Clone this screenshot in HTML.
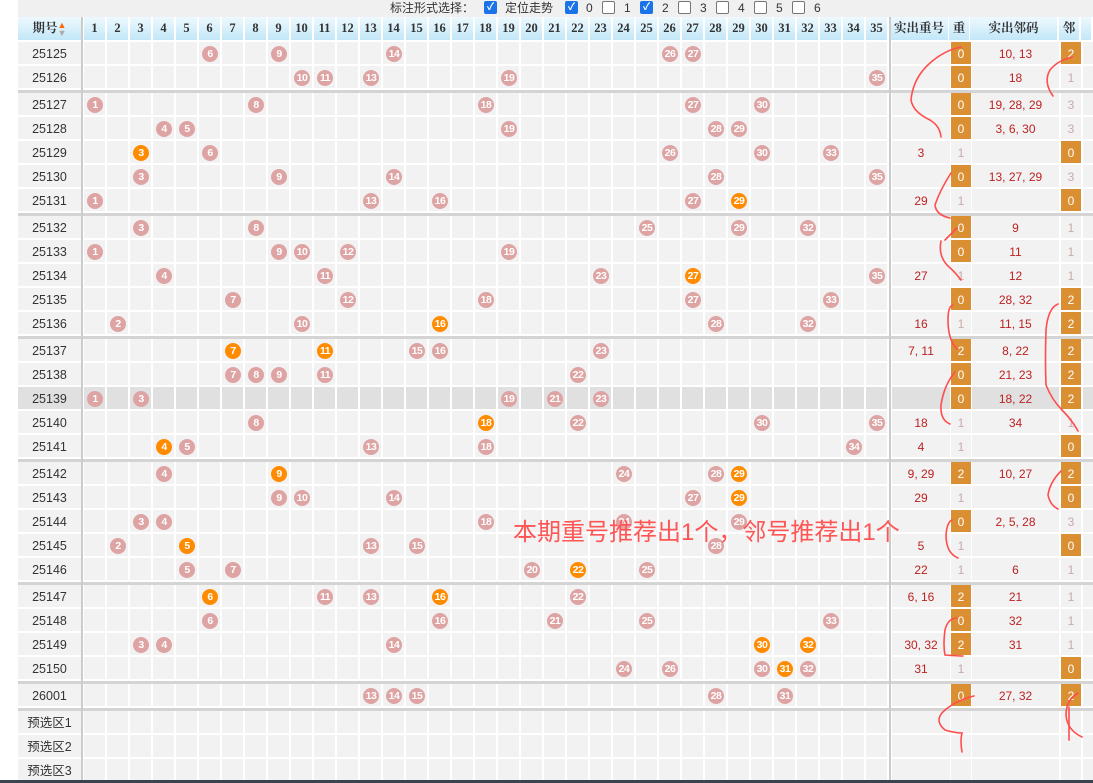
<!DOCTYPE html>
<html><head><meta charset="utf-8"><style>
*{box-sizing:border-box;margin:0;padding:0}
body{width:1093px;height:783px;overflow:hidden;background:#fff;position:relative;font-family:"Liberation Sans","Noto Sans CJK SC",sans-serif;font-size:12px;color:#333}
.top{position:absolute;left:18px;top:0;width:1075px;height:17px;background:#f0f0f0}
.tt{position:absolute;top:1px;font-size:12px;color:#333;line-height:14px}
.cb{position:absolute;top:1px;width:13px;height:13px;border:1px solid #767676;border-radius:2px;background:#fff}
.cb.on{background:#1a73e8;border-color:#1a73e8;color:#fff;font-size:10px;line-height:11px;text-align:center;font-weight:bold}
.hd{position:absolute;left:18px;top:17px;height:23px;width:1075px;display:flex;background:#fff}
.hd span{height:23px;background:linear-gradient(#eef9fe,#c2e7f8);font-weight:bold;font-size:12.5px;line-height:23px;text-align:center;color:#333;font-family:"Liberation Serif","Noto Serif CJK SC",serif}
.hd .c{width:21px;margin-right:2px}
.bk{position:absolute;left:18px;top:40px;width:1075px;height:743px;background:#d4d4d4}
.r{position:absolute;left:18px;width:1075px;height:24px;background:#fff}
.r>div{position:absolute;top:0;height:22px;background:#f2f2f2;line-height:24px;text-align:center}
.q{left:0;width:63px;font-size:12.5px;color:#333}
.g{left:66px;width:805px;background:repeating-linear-gradient(90deg,#f2f2f2 0 21px,#fff 21px 23px)!important}
.s{left:874px;width:58px;color:#b22;font-size:12px}
.z{left:933px;width:20px;color:#c9a9a9}
.m{left:954px;width:87px;color:#b22;font-size:12px}
.n{left:1043px;width:20px;color:#c9a9a9}
.t{left:1065px;width:10px}
.r>div.o{background:#da8f33;color:#fff}
.hl>div{background:#e0e0e0}
.hl>.g{background:repeating-linear-gradient(90deg,#e0e0e0 0 21px,#fff 21px 23px)!important}
.b{position:absolute;top:4px;width:16px;height:16px;border-radius:50%;background:#dea4a4;color:#fff;font-size:10.5px;font-weight:bold;line-height:16px;text-align:center;letter-spacing:-0.5px}
.b.y{background:#ff8c00}
.vd{position:absolute;top:17px;width:2px;height:766px;background:#ccc}
.ft{position:absolute;left:0;top:780px;width:1093px;height:3px;background:#3a4450}
</style></head><body>
<div class="top"></div>
<span class="tt" style="left:390px">标注形式选择：</span>
<span class="cb on" style="left:484px">✓</span><span class="tt" style="left:505px">定位走势</span>
<span class="cb on" style="left:565px">✓</span><span class="tt" style="left:586px">0</span>
<span class="cb" style="left:602px"></span><span class="tt" style="left:624px">1</span>
<span class="cb on" style="left:640px">✓</span><span class="tt" style="left:662px">2</span>
<span class="cb" style="left:678px"></span><span class="tt" style="left:700px">3</span>
<span class="cb" style="left:716px"></span><span class="tt" style="left:738px">4</span>
<span class="cb" style="left:754px"></span><span class="tt" style="left:776px">5</span>
<span class="cb" style="left:792px"></span><span class="tt" style="left:814px">6</span>

<div class="hd"><span style="width:63px;margin-right:3px">期号<b style="color:#f60;font-size:9px;display:inline-block;line-height:8px;vertical-align:middle">▲<br><i style="color:#aaa;font-style:normal">▼</i></b></span><span class="c">1</span><span class="c">2</span><span class="c">3</span><span class="c">4</span><span class="c">5</span><span class="c">6</span><span class="c">7</span><span class="c">8</span><span class="c">9</span><span class="c">10</span><span class="c">11</span><span class="c">12</span><span class="c">13</span><span class="c">14</span><span class="c">15</span><span class="c">16</span><span class="c">17</span><span class="c">18</span><span class="c">19</span><span class="c">20</span><span class="c">21</span><span class="c">22</span><span class="c">23</span><span class="c">24</span><span class="c">25</span><span class="c">26</span><span class="c">27</span><span class="c">28</span><span class="c">29</span><span class="c">30</span><span class="c">31</span><span class="c">32</span><span class="c">33</span><span class="c">34</span><span class="c" style="margin-right:3px">35</span><span style="width:58px;margin-right:1px">实出重号</span><span style="width:20px;margin-right:1px">重</span><span style="width:87px;margin-right:2px">实出邻码</span><span style="width:20px;margin-right:2px">邻</span><span style="width:10px"></span></div>

<div class="bk"></div>
<div style="position:absolute;left:18px;top:40px;width:1075px;height:2px;background:#fff"></div>

<div class="r" style="top:42px"><div class="q">25125</div><div class="g"></div><div class="s"></div><div class="z o">0</div><div class="m">10, 13</div><div class="n o">2</div><div class="t"></div>
<span class="b" style="left:184px">6</span><span class="b" style="left:253px">9</span><span class="b" style="left:368px">14</span><span class="b" style="left:644px">26</span><span class="b" style="left:667px">27</span></div>
<div class="r" style="top:66px"><div class="q">25126</div><div class="g"></div><div class="s"></div><div class="z o">0</div><div class="m">18</div><div class="n">1</div><div class="t"></div>
<span class="b" style="left:276px">10</span><span class="b" style="left:299px">11</span><span class="b" style="left:345px">13</span><span class="b" style="left:483px">19</span><span class="b" style="left:851px">35</span></div>

<div class="r" style="top:93px"><div class="q">25127</div><div class="g"></div><div class="s"></div><div class="z o">0</div><div class="m">19, 28, 29</div><div class="n">3</div><div class="t"></div>
<span class="b" style="left:69px">1</span><span class="b" style="left:230px">8</span><span class="b" style="left:460px">18</span><span class="b" style="left:667px">27</span><span class="b" style="left:736px">30</span></div>
<div class="r" style="top:117px"><div class="q">25128</div><div class="g"></div><div class="s"></div><div class="z o">0</div><div class="m">3, 6, 30</div><div class="n">3</div><div class="t"></div>
<span class="b" style="left:138px">4</span><span class="b" style="left:161px">5</span><span class="b" style="left:483px">19</span><span class="b" style="left:690px">28</span><span class="b" style="left:713px">29</span></div>
<div class="r" style="top:141px"><div class="q">25129</div><div class="g"></div><div class="s">3</div><div class="z">1</div><div class="m"></div><div class="n o">0</div><div class="t"></div>
<span class="b y" style="left:115px">3</span><span class="b" style="left:184px">6</span><span class="b" style="left:644px">26</span><span class="b" style="left:736px">30</span><span class="b" style="left:805px">33</span></div>
<div class="r" style="top:165px"><div class="q">25130</div><div class="g"></div><div class="s"></div><div class="z o">0</div><div class="m">13, 27, 29</div><div class="n">3</div><div class="t"></div>
<span class="b" style="left:115px">3</span><span class="b" style="left:253px">9</span><span class="b" style="left:368px">14</span><span class="b" style="left:690px">28</span><span class="b" style="left:851px">35</span></div>
<div class="r" style="top:189px"><div class="q">25131</div><div class="g"></div><div class="s">29</div><div class="z">1</div><div class="m"></div><div class="n o">0</div><div class="t"></div>
<span class="b" style="left:69px">1</span><span class="b" style="left:345px">13</span><span class="b" style="left:414px">16</span><span class="b" style="left:667px">27</span><span class="b y" style="left:713px">29</span></div>

<div class="r" style="top:216px"><div class="q">25132</div><div class="g"></div><div class="s"></div><div class="z o">0</div><div class="m">9</div><div class="n">1</div><div class="t"></div>
<span class="b" style="left:115px">3</span><span class="b" style="left:230px">8</span><span class="b" style="left:621px">25</span><span class="b" style="left:713px">29</span><span class="b" style="left:782px">32</span></div>
<div class="r" style="top:240px"><div class="q">25133</div><div class="g"></div><div class="s"></div><div class="z o">0</div><div class="m">11</div><div class="n">1</div><div class="t"></div>
<span class="b" style="left:69px">1</span><span class="b" style="left:253px">9</span><span class="b" style="left:276px">10</span><span class="b" style="left:322px">12</span><span class="b" style="left:483px">19</span></div>
<div class="r" style="top:264px"><div class="q">25134</div><div class="g"></div><div class="s">27</div><div class="z">1</div><div class="m">12</div><div class="n">1</div><div class="t"></div>
<span class="b" style="left:138px">4</span><span class="b" style="left:299px">11</span><span class="b" style="left:575px">23</span><span class="b y" style="left:667px">27</span><span class="b" style="left:851px">35</span></div>
<div class="r" style="top:288px"><div class="q">25135</div><div class="g"></div><div class="s"></div><div class="z o">0</div><div class="m">28, 32</div><div class="n o">2</div><div class="t"></div>
<span class="b" style="left:207px">7</span><span class="b" style="left:322px">12</span><span class="b" style="left:460px">18</span><span class="b" style="left:667px">27</span><span class="b" style="left:805px">33</span></div>
<div class="r" style="top:312px"><div class="q">25136</div><div class="g"></div><div class="s">16</div><div class="z">1</div><div class="m">11, 15</div><div class="n o">2</div><div class="t"></div>
<span class="b" style="left:92px">2</span><span class="b" style="left:276px">10</span><span class="b y" style="left:414px">16</span><span class="b" style="left:690px">28</span><span class="b" style="left:782px">32</span></div>

<div class="r" style="top:339px"><div class="q">25137</div><div class="g"></div><div class="s">7, 11</div><div class="z o">2</div><div class="m">8, 22</div><div class="n o">2</div><div class="t"></div>
<span class="b y" style="left:207px">7</span><span class="b y" style="left:299px">11</span><span class="b" style="left:391px">15</span><span class="b" style="left:414px">16</span><span class="b" style="left:575px">23</span></div>
<div class="r" style="top:363px"><div class="q">25138</div><div class="g"></div><div class="s"></div><div class="z o">0</div><div class="m">21, 23</div><div class="n o">2</div><div class="t"></div>
<span class="b" style="left:207px">7</span><span class="b" style="left:230px">8</span><span class="b" style="left:253px">9</span><span class="b" style="left:299px">11</span><span class="b" style="left:552px">22</span></div>
<div class="r hl" style="top:387px"><div class="q">25139</div><div class="g"></div><div class="s"></div><div class="z o">0</div><div class="m">18, 22</div><div class="n o">2</div><div class="t"></div>
<span class="b" style="left:69px">1</span><span class="b" style="left:115px">3</span><span class="b" style="left:483px">19</span><span class="b" style="left:529px">21</span><span class="b" style="left:575px">23</span></div>
<div class="r" style="top:411px"><div class="q">25140</div><div class="g"></div><div class="s">18</div><div class="z">1</div><div class="m">34</div><div class="n">1</div><div class="t"></div>
<span class="b" style="left:230px">8</span><span class="b y" style="left:460px">18</span><span class="b" style="left:552px">22</span><span class="b" style="left:736px">30</span><span class="b" style="left:851px">35</span></div>
<div class="r" style="top:435px"><div class="q">25141</div><div class="g"></div><div class="s">4</div><div class="z">1</div><div class="m"></div><div class="n o">0</div><div class="t"></div>
<span class="b y" style="left:138px">4</span><span class="b" style="left:161px">5</span><span class="b" style="left:345px">13</span><span class="b" style="left:460px">18</span><span class="b" style="left:828px">34</span></div>

<div class="r" style="top:462px"><div class="q">25142</div><div class="g"></div><div class="s">9, 29</div><div class="z o">2</div><div class="m">10, 27</div><div class="n o">2</div><div class="t"></div>
<span class="b" style="left:138px">4</span><span class="b y" style="left:253px">9</span><span class="b" style="left:598px">24</span><span class="b" style="left:690px">28</span><span class="b y" style="left:713px">29</span></div>
<div class="r" style="top:486px"><div class="q">25143</div><div class="g"></div><div class="s">29</div><div class="z">1</div><div class="m"></div><div class="n o">0</div><div class="t"></div>
<span class="b" style="left:253px">9</span><span class="b" style="left:276px">10</span><span class="b" style="left:368px">14</span><span class="b" style="left:667px">27</span><span class="b y" style="left:713px">29</span></div>
<div class="r" style="top:510px"><div class="q">25144</div><div class="g"></div><div class="s"></div><div class="z o">0</div><div class="m">2, 5, 28</div><div class="n">3</div><div class="t"></div>
<span class="b" style="left:115px">3</span><span class="b" style="left:138px">4</span><span class="b" style="left:460px">18</span><span class="b" style="left:598px">24</span><span class="b" style="left:713px">29</span></div>
<div class="r" style="top:534px"><div class="q">25145</div><div class="g"></div><div class="s">5</div><div class="z">1</div><div class="m"></div><div class="n o">0</div><div class="t"></div>
<span class="b" style="left:92px">2</span><span class="b y" style="left:161px">5</span><span class="b" style="left:345px">13</span><span class="b" style="left:391px">15</span><span class="b" style="left:690px">28</span></div>
<div class="r" style="top:558px"><div class="q">25146</div><div class="g"></div><div class="s">22</div><div class="z">1</div><div class="m">6</div><div class="n">1</div><div class="t"></div>
<span class="b" style="left:161px">5</span><span class="b" style="left:207px">7</span><span class="b" style="left:506px">20</span><span class="b y" style="left:552px">22</span><span class="b" style="left:621px">25</span></div>

<div class="r" style="top:585px"><div class="q">25147</div><div class="g"></div><div class="s">6, 16</div><div class="z o">2</div><div class="m">21</div><div class="n">1</div><div class="t"></div>
<span class="b y" style="left:184px">6</span><span class="b" style="left:299px">11</span><span class="b" style="left:345px">13</span><span class="b y" style="left:414px">16</span><span class="b" style="left:552px">22</span></div>
<div class="r" style="top:609px"><div class="q">25148</div><div class="g"></div><div class="s"></div><div class="z o">0</div><div class="m">32</div><div class="n">1</div><div class="t"></div>
<span class="b" style="left:184px">6</span><span class="b" style="left:414px">16</span><span class="b" style="left:529px">21</span><span class="b" style="left:621px">25</span><span class="b" style="left:805px">33</span></div>
<div class="r" style="top:633px"><div class="q">25149</div><div class="g"></div><div class="s">30, 32</div><div class="z o">2</div><div class="m">31</div><div class="n">1</div><div class="t"></div>
<span class="b" style="left:115px">3</span><span class="b" style="left:138px">4</span><span class="b" style="left:368px">14</span><span class="b y" style="left:736px">30</span><span class="b y" style="left:782px">32</span></div>
<div class="r" style="top:657px"><div class="q">25150</div><div class="g"></div><div class="s">31</div><div class="z">1</div><div class="m"></div><div class="n o">0</div><div class="t"></div>
<span class="b" style="left:598px">24</span><span class="b" style="left:644px">26</span><span class="b" style="left:736px">30</span><span class="b y" style="left:759px">31</span><span class="b" style="left:782px">32</span></div>

<div class="r" style="top:684px"><div class="q">26001</div><div class="g"></div><div class="s"></div><div class="z o">0</div><div class="m">27, 32</div><div class="n o">2</div><div class="t"></div>
<span class="b" style="left:345px">13</span><span class="b" style="left:368px">14</span><span class="b" style="left:391px">15</span><span class="b" style="left:690px">28</span><span class="b" style="left:759px">31</span></div>

<div class="r" style="top:711px"><div class="q">预选区1</div><div class="g"></div><div class="s"></div><div class="z"></div><div class="m"></div><div class="n"></div><div class="t"></div></div>
<div class="r" style="top:735px"><div class="q">预选区2</div><div class="g"></div><div class="s"></div><div class="z"></div><div class="m"></div><div class="n"></div><div class="t"></div></div>
<div class="r" style="top:759px"><div class="q">预选区3</div><div class="g"></div><div class="s"></div><div class="z"></div><div class="m"></div><div class="n"></div><div class="t"></div></div>

<div class="vd" style="left:81px"></div>
<div class="vd" style="left:889px"></div>
<div class="ft"></div>

<svg style="position:absolute;left:0;top:0" width="1093" height="783" fill="none" stroke="#ff4d4d" stroke-width="1.6" stroke-linecap="round">
<path d="M961 47 Q945 50 930 63 Q913 78 911 100 Q913 112 930 120 Q940 126 941 137"/>
<path d="M1073 57 Q1058 60 1050 70 Q1043 82 1053 96"/>
<path d="M951 173 Q940 190 935 205 Q936 215 950 218"/>
<path d="M957 228 Q950 235 945 240"/>
<path d="M941 241 Q938 256 948 266 Q955 272 961 280"/>
<path d="M953 305 Q948 306 948 320 Q948 340 957 349"/>
<path d="M955 372 Q944 385 941 405 Q940 420 950 424"/>
<path d="M1058 304 Q1048 308 1046 330 Q1045 360 1046 385 Q1052 400 1062 410 Q1072 420 1078 431"/>
<path d="M1061 471 Q1050 482 1048 495 Q1050 505 1058 509"/>
<path d="M952 520 Q947 522 946 535 Q946 553 958 558"/>
<path d="M957 618 Q948 618 945 630 Q943 645 945 655 Q958 656 963 656"/>
<path d="M974 696 Q957 700 945 710 Q933 720 945 730 Q955 733 962 733 Q960 740 962 752"/>
<path d="M1078 693 Q1066 700 1066 715 Q1067 730 1082 737"/>
<path d="M1069 707 L1069 740"/>
<text x="513" y="540" font-family="Liberation Sans,Noto Sans CJK SC,sans-serif" font-size="24" fill="#ff5555" stroke="none">本期重号推荐出1个，邻号推荐出1个</text>
</svg>
</body></html>
